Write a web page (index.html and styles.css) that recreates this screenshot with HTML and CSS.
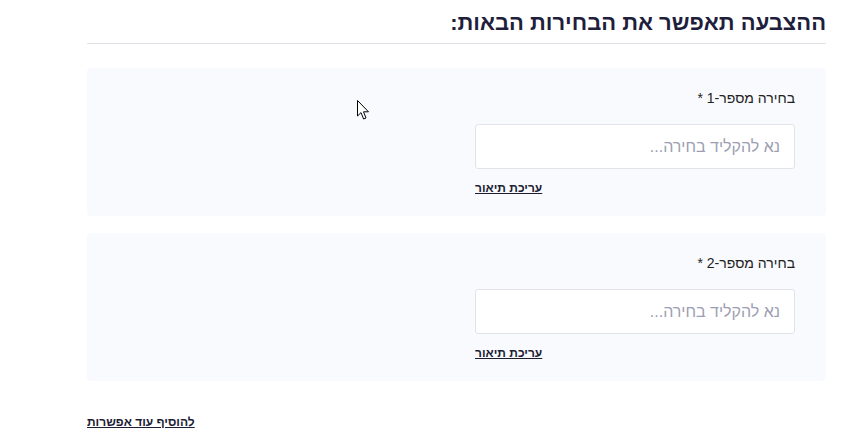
FILE: index.html
```html
<!DOCTYPE html>
<html lang="he" dir="rtl">
<head>
    <meta charset="UTF-8">
    <meta name="viewport" content="width=device-width, initial-scale=1.0">
    <title>הגדרות הצבעה</title>
    <link rel="stylesheet" href="styles.css">
</head>
<body>
    <main class="poll">
        <h2 class="poll-title">ההצבעה תאפשר את הבחירות הבאות:</h2>

        <section class="option-card">
            <label class="option-label" for="opt1">בחירה מספר-1 *</label>
            <div class="option-field">
                <input class="option-input" id="opt1" type="text" placeholder="נא להקליד בחירה...">
                <a class="option-link" href="#">עריכת תיאור</a>
            </div>
        </section>

        <section class="option-card">
            <label class="option-label" for="opt2">בחירה מספר-2 *</label>
            <div class="option-field">
                <input class="option-input" id="opt2" type="text" placeholder="נא להקליד בחירה...">
                <a class="option-link" href="#">עריכת תיאור</a>
            </div>
        </section>

        <div class="add-row">
            <a class="option-link" href="#">להוסיף עוד אפשרות</a>
        </div>
    </main>

    <!-- mouse pointer seen in the capture -->
    <svg class="cursor" width="13" height="21" viewBox="0 0 13 21">
        <path d="M0.5 0.5 L0.5 16 L4 12.6 L6.6 19 L9 18 L6.5 11.8 L11.5 11.8 Z" fill="#fff" stroke="#000" stroke-width="1"/>
    </svg>
</body>
</html>
```

FILE: styles.css
```css
body {
    font-family: "Liberation Sans", Arial, sans-serif;
    margin: 0;
    padding: 0;
    background-color: #fff;
    color: #222;
}
.poll {
    margin: 0 35px 0 87px;
    padding-top: 8px;
}
.poll-title {
    margin: 0;
    font-size: 22px;
    line-height: 30px;
    color: #1f1f3d;
    padding-bottom: 5px;
    border-bottom: 1px solid #e1e1e8;
}
.option-card {
    display: flex;
    flex-direction: column;
    align-items: flex-start;
    background-color: #f9fafd;
    border-radius: 4px;
    padding: 20px 31px 20px;
    margin-top: 24px;
}
.option-card + .option-card {
    margin-top: 17px;
}
.option-label {
    font-size: 14px;
    line-height: 20px;
    color: #222;
    margin-bottom: 16px;
}
.option-field {
    display: flex;
    flex-direction: column;
    align-items: flex-end;
    width: 320px;
}
.option-input {
    box-sizing: border-box;
    width: 100%;
    height: 45px;
    padding: 0 14px;
    border: 1px solid #e2e3ea;
    border-radius: 3px;
    background: #fff;
    font-family: inherit;
    font-size: 16px;
    color: #222;
}
.option-input::placeholder {
    color: #9c9eb2;
}
.option-link {
    font-size: 12px;
    line-height: 16px;
    font-weight: bold;
    color: #1d1d35;
    text-decoration: underline;
}
.option-field .option-link {
    margin-top: 11px;
}
.add-row {
    display: flex;
    justify-content: flex-end;
    margin-top: 33px;
}
.cursor {
    position: absolute;
    left: 357px;
    top: 100px;
}
```
